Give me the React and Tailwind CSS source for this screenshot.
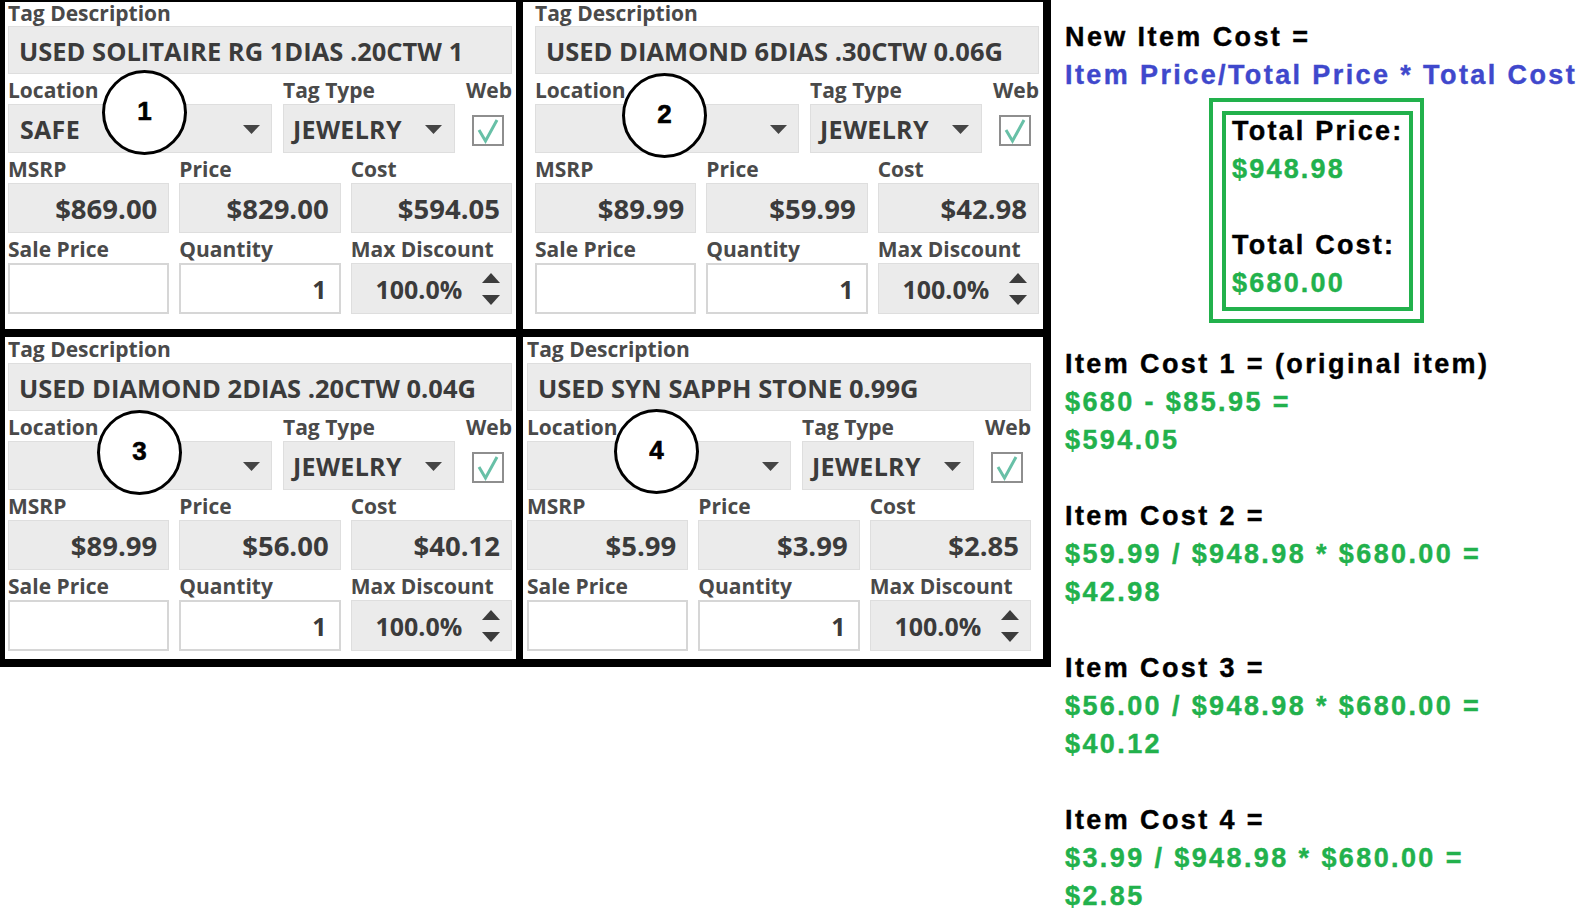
import React from "react";

const panels = [
  { desc: "USED SOLITAIRE RG 1DIAS .20CTW 1", loc: "SAFE", msrp: "$869.00", price: "$829.00", cost: "$594.05", n: "1" },
  { desc: "USED DIAMOND 6DIAS .30CTW 0.06G", loc: "", msrp: "$89.99", price: "$59.99", cost: "$42.98", n: "2" },
  { desc: "USED DIAMOND 2DIAS .20CTW 0.04G", loc: "", msrp: "$89.99", price: "$56.00", cost: "$40.12", n: "3" },
  { desc: "USED SYN SAPPH STONE 0.99G", loc: "", msrp: "$5.99", price: "$3.99", cost: "$2.85", n: "4" },
];

function Label({ children }) {
  return (
    <div className="text-[21px] font-bold text-[#4a4a4a] leading-[22px] whitespace-nowrap">{children}</div>
  );
}

function Caret() {
  return (
    <svg width="17" height="9" viewBox="0 0 17 9" className="shrink-0">
      <polygon points="0,0 17,0 8.5,9" fill="#454545" />
    </svg>
  );
}

function Check() {
  return (
    <svg width="32" height="31" viewBox="0 0 32 31">
      <rect x="1" y="1" width="30" height="29" fill="#ffffff" stroke="#8e8e8e" strokeWidth="2" />
      <polyline points="7,15 13.5,26 25,5" fill="none" stroke="#68c0a7" strokeWidth="3" strokeLinejoin="miter" />
    </svg>
  );
}

function Spinner() {
  return (
    <svg width="18" height="32" viewBox="0 0 18 32" className="shrink-0">
      <polygon points="9,0 18,10 0,10" fill="#3c3c3c" />
      <polygon points="0,22 18,22 9,32" fill="#3c3c3c" />
    </svg>
  );
}

function Circle({ n, pos }) {
  return (
    <div
      className={`absolute ${pos} w-[85px] h-[85px] rounded-full border-[3px] border-black bg-white flex items-center justify-center font-['Liberation_Sans',Arial,sans-serif] font-bold text-[26px] text-black [-webkit-text-stroke:0.6px_black]`}
    >
      <span className="-mt-[3px]">{n}</span>
    </div>
  );
}

function Panel({ p, pad, first, circlePos }) {
  return (
    <div className={`relative bg-white ${pad} font-['Open_Sans',sans-serif]`}>
      <div className="w-[504px]">
        <div className={`${first ? "h-[24px] pb-[2px]" : "h-[26px] pb-[3px]"} flex items-end`}>
          <Label>Tag Description</Label>
        </div>
        <div className="h-[48px] bg-[#ebebeb] border border-[#dedede] flex items-center pl-[10px] pt-[3px] text-[25.5px] font-bold text-[#3b3b3b] whitespace-nowrap">
          {p.desc}
        </div>

        <div className="h-[30px] flex items-end pb-[3px]">
          <div className="w-[264px]"><Label>Location</Label></div>
          <div className="ml-[11px] w-[172px]"><Label>Tag Type</Label></div>
          <div className="flex-1 flex justify-end"><Label>Web</Label></div>
        </div>
        <div className="h-[49px] flex">
          <div className="w-[264px] bg-[#ebebeb] border border-[#dedede] flex items-center justify-between pl-[11px] pr-[11px] pt-[2px] text-[25px] font-bold text-[#3b3b3b] tracking-[0.3px]">
            <span>{p.loc}</span>
            <Caret />
          </div>
          <div className="ml-[11px] w-[172px] bg-[#ebebeb] border border-[#dedede] flex items-center justify-between pl-[9px] pr-[12px] pt-[2px] text-[25px] font-bold text-[#3b3b3b] tracking-[0.3px]">
            <span>JEWELRY</span>
            <Caret />
          </div>
          <div className="flex-1 flex items-center justify-end pr-[8px] pt-[3px]">
            <Check />
          </div>
        </div>

        <div className="h-[30px] grid grid-cols-3 gap-x-[10px] items-end pb-[3px]">
          <Label>MSRP</Label>
          <Label>Price</Label>
          <Label>Cost</Label>
        </div>
        <div className="h-[50px] grid grid-cols-3 gap-x-[10px]">
          {[p.msrp, p.price, p.cost].map((v, i) => (
            <div key={i} className="bg-[#ebebeb] border border-[#dedede] flex items-center justify-end pr-[11px] pt-[2px] text-[27.5px] font-bold text-[#3b3b3b]">
              {v}
            </div>
          ))}
        </div>

        <div className="h-[30px] grid grid-cols-3 gap-x-[10px] items-end pb-[3px]">
          <Label>Sale Price</Label>
          <Label>Quantity</Label>
          <Label>Max Discount</Label>
        </div>
        <div className="h-[51px] grid grid-cols-3 gap-x-[10px]">
          <div className="bg-white border-2 border-[#d6d6d6]"></div>
          <div className="bg-white border-2 border-[#d6d6d6] flex items-center justify-end pr-[12px] pt-[3px] text-[25px] font-bold text-[#3b3b3b]">1</div>
          <div className="bg-[#ebebeb] border border-[#dedede] flex items-center pr-[11px] text-[25px] font-bold text-[#3b3b3b]">
            <span className="flex-1 text-center pl-[4px] pt-[3px]">100.0%</span>
            <Spinner />
          </div>
        </div>
      </div>
      <Circle n={p.n} pos={circlePos} />
    </div>
  );
}

export default function App() {
  return (
    <div className="w-[1589px] h-[918px] bg-white flex items-start overflow-hidden">
      <div className="bg-black pl-[5px] pr-[8px] pt-[2px] pb-[8px] grid grid-cols-[511px_520px] grid-rows-[327px_322px] gap-x-[7px] gap-y-[8px] shrink-0">
        <Panel p={panels[0]} pad="pl-[3px]" first circlePos="left-[97px] top-[68px]" />
        <Panel p={panels[1]} pad="pl-[12px]" first circlePos="left-[99px] top-[71px]" />
        <Panel p={panels[2]} pad="pl-[3px]" circlePos="left-[92px] top-[73px]" />
        <Panel p={panels[3]} pad="pl-[4px]" circlePos="left-[91px] top-[72px]" />
      </div>

      <div className="ml-[14px] pt-[18px] font-['Liberation_Sans',Arial,sans-serif] font-bold text-[27px] leading-[38px] tracking-[2.4px] whitespace-nowrap [-webkit-text-stroke:0.4px_currentColor]">
        <div className="text-black">New Item Cost =</div>
        <div className="text-[#3f48cc]">Item Price/Total Price * Total Cost</div>

        <div className="mt-[4px] ml-[144px] w-[215px] border-[4px] border-[#22b14c] pt-[9px] pl-[9px] pr-[7px] pb-[8px]">
          <div className="border-[4px] border-[#22b14c] pl-[6px] pb-[5px] tracking-[2.2px]">
            <div className="-mt-[3px] text-black">Total Price:</div>
            <div className="text-[#22b14c]">$948.98</div>
            <div className="h-[38px]"></div>
            <div className="text-black">Total Cost:</div>
            <div className="text-[#22b14c]">$680.00</div>
          </div>
        </div>

        <div className="mt-[22px]">
          <div className="text-black">Item Cost 1 = (original item)</div>
          <div className="text-[#22b14c]">$680 - $85.95 =</div>
          <div className="text-[#22b14c]">$594.05</div>
        </div>
        <div className="mt-[38px]">
          <div className="text-black">Item Cost 2 =</div>
          <div className="text-[#22b14c]">$59.99 / $948.98 * $680.00 =</div>
          <div className="text-[#22b14c]">$42.98</div>
        </div>
        <div className="mt-[38px]">
          <div className="text-black">Item Cost 3 =</div>
          <div className="text-[#22b14c]">$56.00 / $948.98 * $680.00 =</div>
          <div className="text-[#22b14c]">$40.12</div>
        </div>
        <div className="mt-[38px]">
          <div className="text-black">Item Cost 4 =</div>
          <div className="text-[#22b14c]">$3.99 / $948.98 * $680.00 =</div>
          <div className="text-[#22b14c]">$2.85</div>
        </div>
      </div>
    </div>
  );
}
